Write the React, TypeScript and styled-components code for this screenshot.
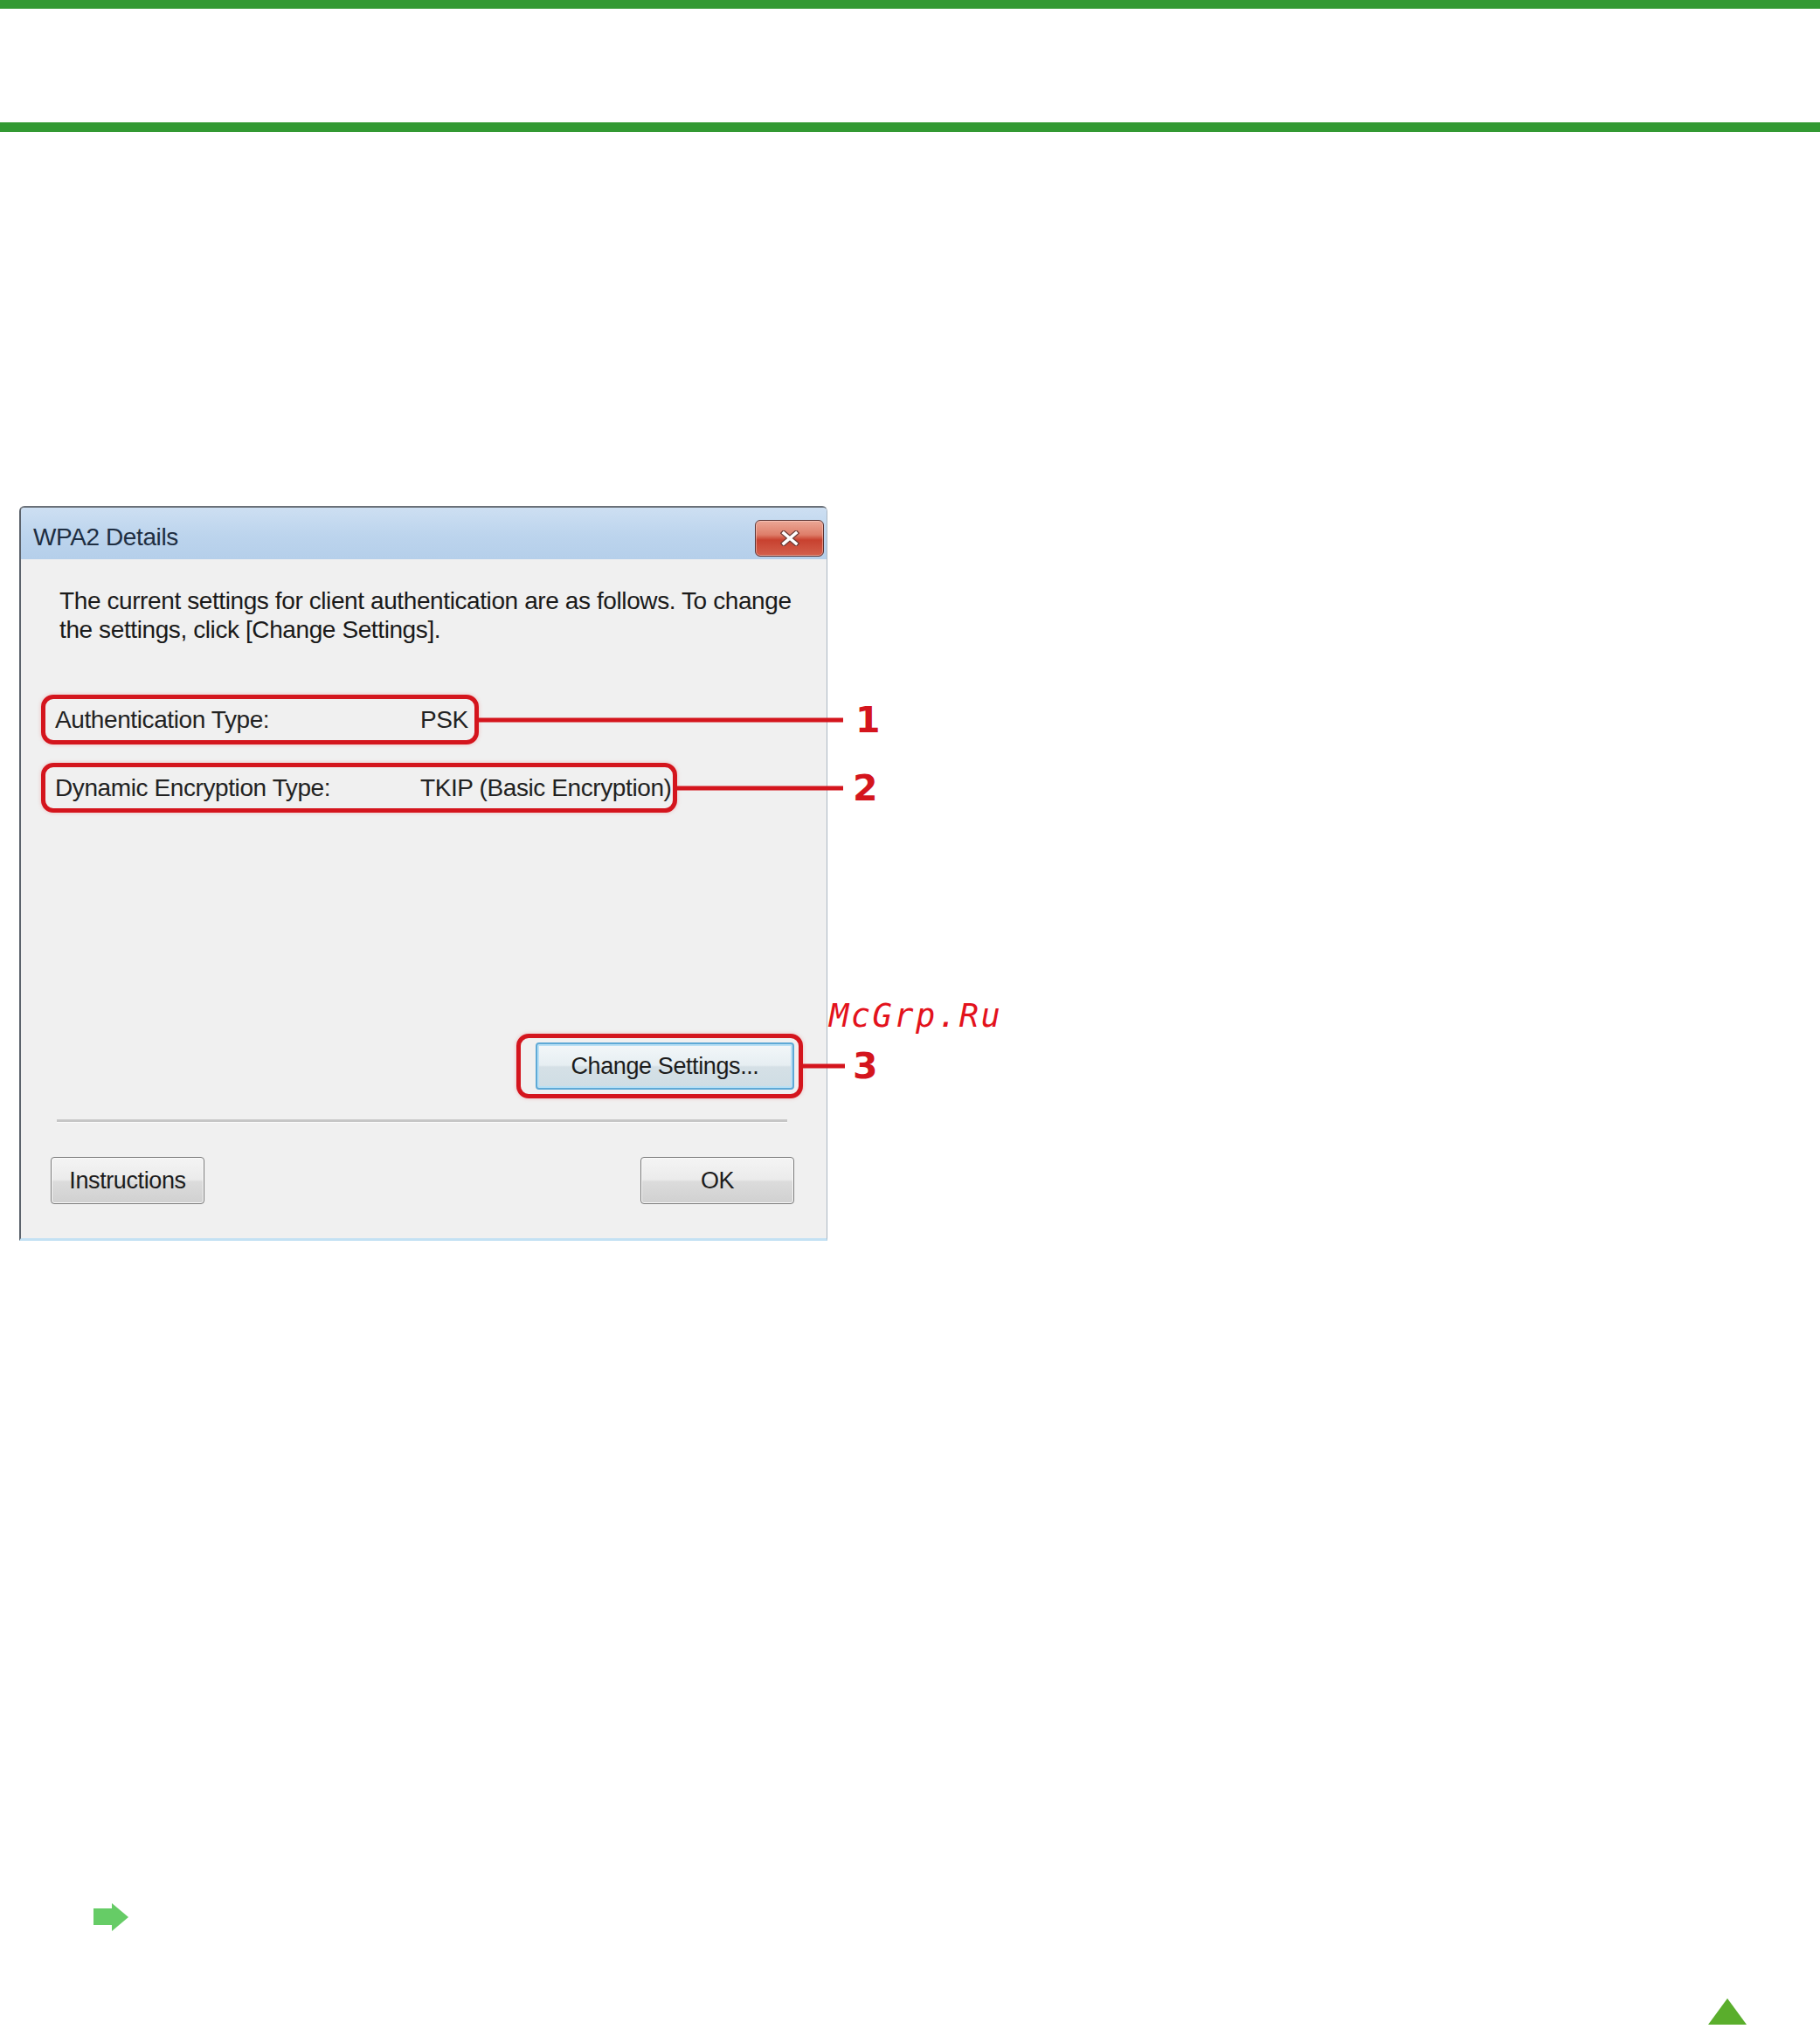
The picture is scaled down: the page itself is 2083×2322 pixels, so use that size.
import React from "react";
import styled, { createGlobalStyle } from "styled-components";

const GlobalStyle = createGlobalStyle`
  html, body { margin: 0; padding: 0; background: #ffffff; }
  body { font-family: "Liberation Sans", Arial, sans-serif; }
  #root { min-height: 2322px; }
`;

const RED = "#d4151d";
const UI_FONT = `"Liberation Sans Narrow", "Liberation Sans", Arial, sans-serif`;

const Page = styled.div`
  display: flex;
  flex-direction: column;
  width: 2083px;
  min-height: 2322px;
`;

const GreenBar = styled.div<{ $h: number }>`
  height: ${(p) => p.$h}px;
  background: #339933;
`;

const Header = styled.header`
  height: 130px;
`;

const Main = styled.main`
  padding: 428px 0 0 22px;
  display: flex;
  flex-direction: column;
`;

const Figure = styled.figure`
  position: relative;
  margin: 0;
  width: 925px;
`;

const Dialog = styled.div`
  box-sizing: border-box;
  width: 925px;
  height: 841px;
  background: #f0f0f0;
  border-left: 2px solid #5b626b;
  border-top: 2px solid #6a7078;
  border-right: 1px solid #aab6c2;
  border-bottom: 3px solid #c3e1f3;
  border-radius: 6px 6px 0 0;
  display: flex;
  flex-direction: column;
  font-family: ${UI_FONT};
  letter-spacing: -0.4px;
  color: #1c1c1c;
`;

const TitleBar = styled.div`
  height: 59px;
  box-sizing: border-box;
  display: flex;
  align-items: center;
  justify-content: space-between;
  padding: 0 3px 0 14px;
  background: linear-gradient(#cddff2 0%, #bcd4ed 55%, #b5cfea 100%);
  border-radius: 4px 4px 0 0;
`;

const Title = styled.span`
  font-size: 28px;
  color: #1e2e42;
  padding-top: 8px;
`;

const CloseButton = styled.div`
  width: 79px;
  height: 42px;
  box-sizing: border-box;
  border: 1px solid #5a3434;
  border-radius: 6px;
  background: linear-gradient(#eba796 0%, #de7e6a 40%, #c8412f 55%, #d3604c 100%);
  box-shadow: inset 0 0 0 1px rgba(255, 220, 210, 0.5);
  display: flex;
  align-items: center;
  justify-content: center;
  margin-top: 11px;
`;

const Body = styled.div`
  display: flex;
  flex-direction: column;
  flex: 1;
`;

const Intro = styled.p`
  margin: 31px 0 0 44px;
  font-size: 28px;
  line-height: 33px;
  white-space: nowrap;
  color: #1a1a1a;
`;

const Callout = styled.div<{ $w: number; $mt: number }>`
  position: relative;
  box-sizing: border-box;
  width: ${(p) => p.$w}px;
  height: 57px;
  margin: ${(p) => p.$mt}px 0 0 23px;
  border: 5px solid ${RED};
  border-radius: 14px;
  box-shadow: 0 0 4px rgba(230, 90, 90, 0.35);
  display: flex;
  align-items: center;
  padding-left: 11px;
  font-size: 28px;
  color: #222;
  white-space: nowrap;
`;

const Label = styled.span`
  width: 418px;
  flex: none;
`;

const Leader = styled.span`
  position: absolute;
  left: calc(100% + 5px);
  top: 50%;
  transform: translateY(-50%);
  display: flex;
  align-items: center;
`;

const LeaderLine = styled.span<{ $w: number }>`
  display: block;
  width: ${(p) => p.$w}px;
  height: 5px;
  background: ${RED};
`;

const Num = styled.span<{ $gap: number }>`
  margin-left: ${(p) => p.$gap}px;
  font-family: "DejaVu Sans", sans-serif;
  font-weight: bold;
  font-size: 41px;
  letter-spacing: 0;
  line-height: 1;
  color: ${RED};
`;

const ActionRow = styled.div`
  display: flex;
  justify-content: flex-end;
  margin: 253px 27px 0 0;
`;

const ActionCallout = styled.div`
  position: relative;
  box-sizing: border-box;
  width: 328px;
  height: 74px;
  border: 5px solid ${RED};
  border-radius: 14px;
  box-shadow: 0 0 4px rgba(230, 90, 90, 0.35);
  padding: 5px 5px 5px 17px;
  display: flex;
`;

const WinButton = styled.div<{ $w: number; $default?: boolean }>`
  box-sizing: border-box;
  width: ${(p) => p.$w}px;
  height: 54px;
  flex: none;
  display: flex;
  align-items: center;
  justify-content: center;
  font-size: 27px;
  color: #1c1c1c;
  border-radius: 4px;
  border: ${(p) => (p.$default ? "2px solid #5ea9d6" : "1px solid #7a7a7a")};
  background: ${(p) =>
    p.$default
      ? "linear-gradient(#f3f7f9 0%, #e6eef2 48%, #d5e0e6 52%, #cfdde4 100%)"
      : "linear-gradient(#f4f4f4 0%, #ebebeb 48%, #dcdcdc 52%, #d0d0d0 100%)"};
  box-shadow: ${(p) =>
    p.$default ? "inset 0 0 0 2px #b9e0f5" : "inset 0 0 0 1px #fbfbfb"};
`;

const Separator = styled.hr`
  margin: 24px 0 0 41px;
  width: 836px;
  height: 0;
  border: none;
  border-top: 3px solid #c6c6c6;
  border-bottom: 1px solid #fafafa;
`;

const ButtonBar = styled.div`
  display: flex;
  justify-content: space-between;
  margin-top: 39px;
  padding: 0 37px 0 34px;
`;

const Watermark = styled.span`
  position: absolute;
  left: 927px;
  top: 565px;
  font-family: "DejaVu Sans Mono", monospace;
  font-style: italic;
  font-size: 37px;
  line-height: 1;
  letter-spacing: 2.5px;
  color: #e3121c;
  white-space: nowrap;
`;

const LinkRow = styled.div`
  margin-top: 758px;
  padding-left: 85px;
  height: 32px;
  display: flex;
  align-items: center;
`;

const Footer = styled.footer`
  margin-top: 77px;
  display: flex;
  justify-content: flex-end;
  padding-right: 84px;
`;

const CloseIcon = () => (
  <svg width="22" height="18" viewBox="0 0 22 18">
    <path d="M4 3 L18 15 M18 3 L4 15" stroke="#6b3a34" strokeWidth="6" strokeLinecap="square" />
    <path d="M4 3 L18 15 M18 3 L4 15" stroke="#ffffff" strokeWidth="3.6" strokeLinecap="square" />
  </svg>
);

const ArrowIcon = () => (
  <svg width="40" height="32" viewBox="0 0 40 32">
    <path d="M0 6 H21 V0 L40 16 L21 32 V25 H0 Z" fill="#66cc66" />
  </svg>
);

const UpIcon = () => (
  <svg width="44" height="30" viewBox="0 0 44 30">
    <path d="M22 0 L44 30 H0 Z" fill="#5aae2c" />
  </svg>
);

export default function App() {
  return (
    <>
      <GlobalStyle />
      <Page>
        <GreenBar $h={10} />
        <Header />
        <GreenBar $h={11} />
        <Main>
          <Figure>
            <Dialog>
              <TitleBar>
                <Title>WPA2 Details</Title>
                <CloseButton>
                  <CloseIcon />
                </CloseButton>
              </TitleBar>
              <Body>
                <Intro>
                  The current settings for client authentication are as follows. To change
                  <br />
                  the settings, click [Change Settings].
                </Intro>
                <Callout $w={501} $mt={58}>
                  <Label>Authentication Type:</Label>
                  <span>PSK</span>
                  <Leader>
                    <LeaderLine $w={417} />
                    <Num $gap={14}>1</Num>
                  </Leader>
                </Callout>
                <Callout $w={728} $mt={21}>
                  <Label>Dynamic Encryption Type:</Label>
                  <span>TKIP (Basic Encryption)</span>
                  <Leader>
                    <LeaderLine $w={190} />
                    <Num $gap={11}>2</Num>
                  </Leader>
                </Callout>
                <ActionRow>
                  <ActionCallout>
                    <WinButton $w={296} $default>
                      Change Settings...
                    </WinButton>
                    <Leader>
                      <LeaderLine $w={48} />
                      <Num $gap={9}>3</Num>
                    </Leader>
                  </ActionCallout>
                </ActionRow>
                <Separator />
                <ButtonBar>
                  <WinButton $w={176}>Instructions</WinButton>
                  <WinButton $w={176}>OK</WinButton>
                </ButtonBar>
              </Body>
            </Dialog>
            <Watermark>McGrp.Ru</Watermark>
          </Figure>
          <LinkRow>
            <ArrowIcon />
          </LinkRow>
        </Main>
        <Footer>
          <UpIcon />
        </Footer>
      </Page>
    </>
  );
}
